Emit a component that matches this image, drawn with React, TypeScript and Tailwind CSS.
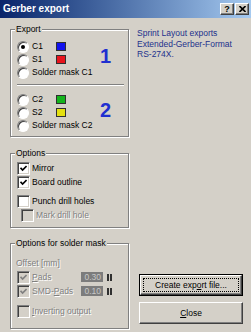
import React from "react";

const dis = "text-[#808080] [text-shadow:1px_1px_0_#fff]";

function Radio({ checked }: { checked?: boolean }) {
  return (
    <div className="relative w-[12px] h-[12px] shrink-0 rounded-full bg-white border border-[#808080] border-r-white border-b-white shadow-[inset_1px_1px_0_#404040]">
      {checked && <div className="absolute left-[3px] top-[3px] w-[4px] h-[4px] rounded-full bg-black" />}
    </div>
  );
}

function Check({ checked, disabled }: { checked?: boolean; disabled?: boolean }) {
  return (
    <div
      className={`relative w-[13px] h-[13px] shrink-0 border border-[#808080] border-r-white border-b-white shadow-[inset_1px_1px_0_#404040,inset_-1px_-1px_0_#d4d0c8] ${
        disabled ? "bg-[#d4d0c8]" : "bg-white"
      }`}
    >
      {checked && (
        <svg className="absolute left-[2px] top-[2px]" width="7" height="7" viewBox="0 0 7 7">
          <path d="M0.5 2.8 L2.6 5 L6.6 1" stroke={disabled ? "#808080" : "#000"} strokeWidth="1.7" fill="none" />
        </svg>
      )}
    </div>
  );
}

function RadioRow({ label, checked, color }: { label: string; checked?: boolean; color?: string }) {
  return (
    <div className="flex items-center h-[13px] gap-[3px]">
      <Radio checked={checked} />
      <span className={color ? "w-[21px]" : ""}>{label}</span>
      {color && <div className="w-[10px] h-[9px] border border-[#303030]" style={{ backgroundColor: color }} />}
    </div>
  );
}

function Group({ label, className, children }: { label: string; className?: string; children?: React.ReactNode }) {
  return (
    <div className={`relative border border-[#808080] shadow-[inset_1px_1px_0_#fff,1px_1px_0_#fff] ${className ?? ""}`}>
      <span className="absolute left-[4px] top-[-6px] px-[1px] bg-[#d4d0c8] leading-[11px]">{label}</span>
      {children}
    </div>
  );
}

function CheckRow({
  label,
  checked,
  disabled,
  className,
}: {
  label: React.ReactNode;
  checked?: boolean;
  disabled?: boolean;
  className?: string;
}) {
  return (
    <div className={`flex items-center h-[14px] gap-[2px] ${className ?? ""}`}>
      <Check checked={checked} disabled={disabled} />
      <span className={disabled ? dis : ""}>{label}</span>
    </div>
  );
}

function Spin() {
  return (
    <div className="flex gap-[1px] ml-[4px]">
      <div className="w-[2px] h-[7px] bg-[#303030]" />
      <div className="w-[2px] h-[7px] bg-[#303030]" />
    </div>
  );
}

function OffsetRow({ label, value }: { label: React.ReactNode; value: string }) {
  return (
    <div className="flex items-center h-[14px]">
      <Check checked disabled />
      <span className={`ml-[2px] w-[49px] ${dis}`}>{label}</span>
      <div className="w-[22px] h-[10px] bg-[#7c7c7c] text-[#c8c8c8] text-right pr-[2px] leading-[10px]">{value}</div>
      <Spin />
    </div>
  );
}

function WinButton({ children, isDefault }: { children: React.ReactNode; isDefault?: boolean }) {
  const inner = (
    <div className="h-full w-full flex items-center justify-center border border-t-white border-l-white border-r-[#404040] border-b-[#404040] shadow-[inset_-1px_-1px_0_#808080] bg-[#d4d0c8]">
      {isDefault ? (
        <div className="h-[calc(100%-4px)] w-[calc(100%-4px)] border border-dotted border-black flex items-center justify-center">
          {children}
        </div>
      ) : (
        children
      )}
    </div>
  );
  return isDefault ? (
    <div className="h-[22px] w-[104px] border border-black">{inner}</div>
  ) : (
    <div className="h-[22px] w-[104px]">{inner}</div>
  );
}

export default function App() {
  return (
    <div className="w-[251px] h-[332px] bg-[#d4d0c8] overflow-hidden text-[8.5px] text-black [font-family:'Liberation_Sans',Arial,sans-serif]">
      {/* Title bar */}
      <div className="h-[18px] flex items-center bg-linear-to-r from-[#0a246a] to-[#a6caf0]">
        <span className="pl-[3px] text-white font-bold text-[10px] leading-[18px]">Gerber export</span>
        <div className="ml-auto mr-[2px] flex gap-[1px]">
          <div className="w-[14px] h-[12px] bg-[#d4d0c8] border border-t-white border-l-white border-r-[#404040] border-b-[#404040] shadow-[inset_-1px_-1px_0_#808080] flex items-center justify-center">
            <span className="font-bold text-[9px] leading-[9px]">?</span>
          </div>
          <div className="w-[14px] h-[12px] bg-[#d4d0c8] border border-t-white border-l-white border-r-[#404040] border-b-[#404040] shadow-[inset_-1px_-1px_0_#808080] flex items-center justify-center">
            <svg width="7" height="6" viewBox="0 0 7 6">
              <path d="M0.5 0 L6.5 6 M6.5 0 L0.5 6" stroke="#000" strokeWidth="1.6" />
            </svg>
          </div>
        </div>
      </div>

      {/* Body */}
      <div className="flex h-[314px] pl-[10px]">
        {/* Left column */}
        <div className="w-[119px] mt-[11px] flex flex-col">
          <Group label="Export" className="h-[108px]">
            <div className="flex pt-[10px]">
              <div className="w-[89px] pl-[6px]">
                <RadioRow checked label="C1" color="#1212ee" />
                <RadioRow label="S1" color="#e8141c" />
                <RadioRow label="Solder mask C1" />
              </div>
              <div className="pt-[6px] text-[20px] leading-[20px] font-bold text-[#1f2fd0]">1</div>
            </div>
            <div className="mt-[5px] ml-[6px] mr-[4px] border-t border-t-[#808080] border-b border-b-white" />
            <div className="flex mt-[7px]">
              <div className="w-[89px] pl-[6px]">
                <RadioRow label="C2" color="#14b41c" />
                <RadioRow label="S2" color="#e4e010" />
                <RadioRow label="Solder mask C2" />
              </div>
              <div className="pt-[7px] text-[20px] leading-[20px] font-bold text-[#1f2fd0]">2</div>
            </div>
          </Group>

          <Group label="Options" className="h-[75px] mt-[16px]">
            <div className="pt-[7px] pl-[6px]">
              <CheckRow checked label="Mirror" />
              <CheckRow checked label="Board outline" />
              <CheckRow label="Punch drill holes" className="mt-[5px]" />
              <CheckRow disabled label="Mark drill hole" className="pl-[4px]" />
            </div>
          </Group>

          <Group label="Options for solder mask" className="h-[86px] mt-[15px]">
            <div className="pt-[13px] pl-[6px]">
              <div className={`h-[12px] leading-[12px] -ml-[1px] ${dis}`}>Offset [mm]</div>
              <div className="mt-[1px]">
                <OffsetRow
                  label={
                    <>
                      <span className="underline">P</span>ads
                    </>
                  }
                  value="0.30"
                />
                <OffsetRow
                  label={
                    <>
                      SMD-<span className="underline">P</span>ads
                    </>
                  }
                  value="0.10"
                />
              </div>
              <CheckRow
                disabled
                className="mt-[6px]"
                label={
                  <>
                    <span className="underline">I</span>nverting output
                  </>
                }
              />
            </div>
          </Group>
        </div>

        {/* Right column */}
        <div className="ml-[8px] flex flex-col w-[106px]">
          <div className="mt-[10px] leading-[10.5px] text-[#22308c]">
            <div>Sprint Layout exports</div>
            <div>Extended-Gerber-Format</div>
            <div>RS-274X.</div>
          </div>
          <div className="mt-auto mb-[8px] ml-[2px] flex flex-col gap-[6px]">
            <WinButton isDefault>
              <span>
                Create exp<span className="underline">o</span>rt file...
              </span>
            </WinButton>
            <WinButton>
              <span>
                <span className="underline">C</span>lose
              </span>
            </WinButton>
          </div>
        </div>
      </div>
    </div>
  );
}
